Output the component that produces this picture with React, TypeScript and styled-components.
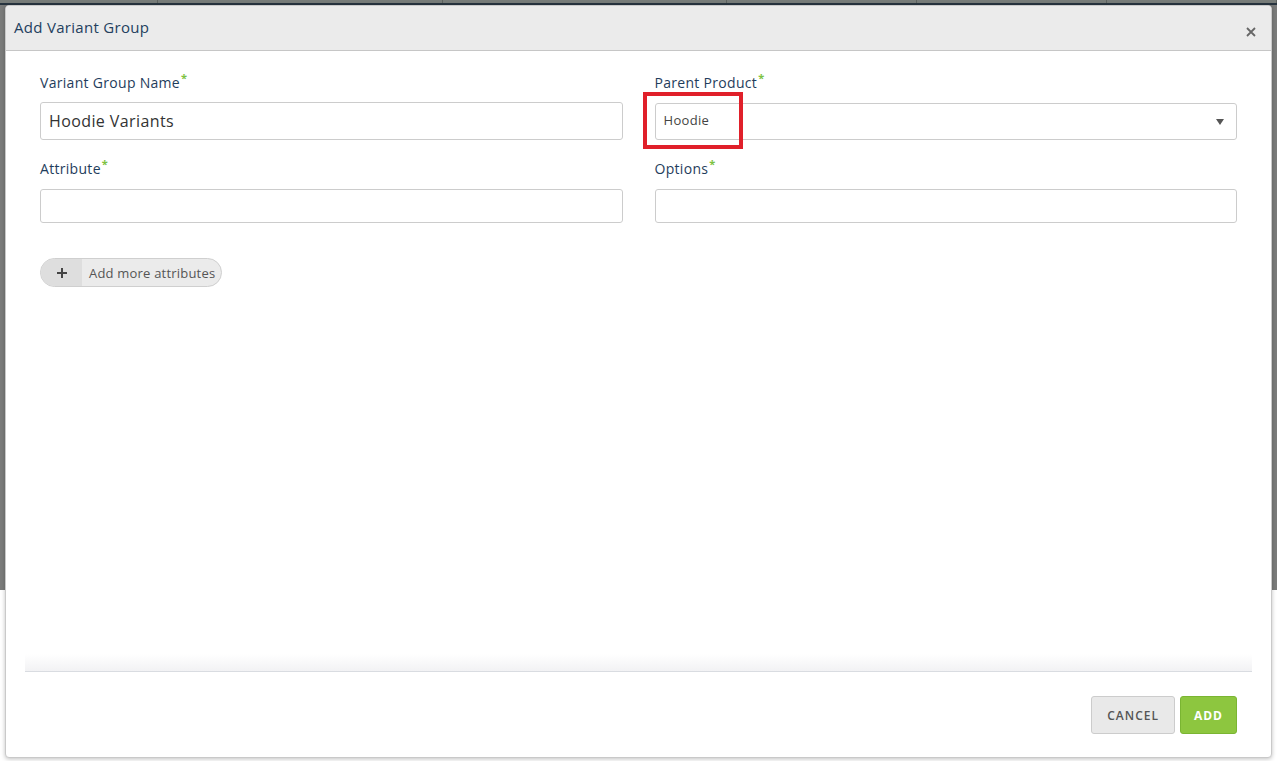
import styled, { createGlobalStyle } from 'styled-components';

const GlobalStyle = createGlobalStyle`
  html, body {
    margin: 0;
    padding: 0;
    background: #ffffff;
    font-family: 'Open Sans', 'Liberation Sans', sans-serif;
  }
  * {
    box-sizing: border-box;
  }
`;

const Page = styled.div`
  width: 1277px;
  height: 761px;
  position: relative;
  overflow: hidden;
  background: #ffffff;
`;

const Backdrop = styled.div`
  height: 590px;
  background: #7b7c7b;
  display: flex;
  flex-direction: column;
`;

const TableHead = styled.div`
  height: 3px;
  display: flex;
  background: #777c79;
  border-bottom: 2px solid #27343f;
  box-sizing: content-box;
`;

const HeadCell = styled.div<{ $w: number }>`
  width: ${(p) => p.$w}px;
  border-right: 1px solid #5d625f;
`;

const Modal = styled.div`
  position: absolute;
  left: 5px;
  top: 5px;
  width: 1267px;
  height: 753px;
  background: #ffffff;
  border: 1px solid #c9c9c9;
  border-radius: 4px;
  box-shadow: 0 1px 4px rgba(0, 0, 0, 0.25);
  display: flex;
  flex-direction: column;
  overflow: hidden;
`;

const Header = styled.div`
  height: 45px;
  flex: none;
  display: flex;
  align-items: center;
  justify-content: space-between;
  padding: 0 14px 2px 8px;
  background: #ebebeb;
  border-bottom: 1px solid #c6c6c6;
`;

const Title = styled.h4`
  margin: 0;
  font-size: 15px;
  font-weight: 400;
  color: #23405e;
  letter-spacing: 0.3px;
`;

const Close = styled.button`
  border: none;
  background: none;
  padding: 0;
  margin-top: 10px;
  width: 12px;
  height: 12px;
  display: flex;
  align-items: center;
  justify-content: center;
  cursor: pointer;
`;

const Body = styled.div`
  flex: 1;
  padding: 25px 34px 0 34px;
  display: flex;
  flex-direction: column;
`;

const Grid = styled.div`
  display: grid;
  grid-template-columns: 1fr 1fr;
  column-gap: 32px;
  row-gap: 22px;
`;

const Field = styled.div`
  display: flex;
  flex-direction: column;
`;

const Label = styled.label<{ $gap?: number }>`
  font-size: 14px;
  font-weight: 400;
  color: #1f3d5c;
  line-height: 14px;
  margin-bottom: ${(p) => p.$gap ?? 12}px;
  height: 14px;
  letter-spacing: 0.3px;
`;

const Req = styled.sup`
  color: #7dc242;
  font-size: 11px;
  font-weight: 700;
  margin-left: 1px;
  vertical-align: 6px;
  line-height: 0;
`;

const TextInput = styled.input<{ $h: number }>`
  height: ${(p) => p.$h}px;
  width: 100%;
  border: 1px solid #cccccc;
  border-radius: 3px;
  padding: 0 8px;
  font-family: inherit;
  font-size: 16px;
  letter-spacing: 0.4px;
  color: #333333;
  outline: none;
  background: #ffffff;
`;

const SelectBox = styled.div`
  height: 37px;
  margin-top: 1px;
  border: 1px solid #cccccc;
  border-radius: 3px;
  display: flex;
  align-items: center;
  justify-content: space-between;
  padding: 0 12px 3px 8px;
  font-size: 13px;
  letter-spacing: 0.3px;
  color: #444444;
  position: relative;
`;

const Highlight = styled.div`
  position: absolute;
  left: -13px;
  top: -12px;
  width: 100px;
  height: 57px;
  border: 4px solid #e0202a;
`;

const Caret = styled.span`
  width: 0;
  height: 0;
  margin-top: 3px;
  border-left: 4px solid transparent;
  border-right: 4px solid transparent;
  border-top: 6px solid #555555;
`;

const AddMore = styled.button`
  margin-top: 35px;
  align-self: flex-start;
  height: 29px;
  display: flex;
  align-items: stretch;
  padding: 0;
  border: 1px solid #cfcfcf;
  border-radius: 15px;
  background: #ebebeb;
  overflow: hidden;
  font-family: inherit;
  cursor: pointer;
`;

const AddIcon = styled.span`
  width: 41px;
  display: flex;
  align-items: center;
  justify-content: center;
  background: #dedede;
`;

const AddText = styled.span`
  display: flex;
  align-items: center;
  padding: 0 6px 0 7px;
  font-size: 13px;
  letter-spacing: 0.2px;
  color: #555555;
`;

const Footer = styled.div`
  flex: none;
  margin: 0 19px;
  height: 86px;
  position: relative;
  border-top: 1px solid #d9dce1;
  display: flex;
  justify-content: flex-end;
  align-items: flex-start;
  padding: 24px 15px 0 0;
  gap: 5px;
  &::before {
    content: '';
    position: absolute;
    left: 0;
    right: 0;
    top: -18px;
    height: 17px;
    background: linear-gradient(to bottom, rgba(242, 242, 244, 0), #f2f2f4);
  }
`;

const Btn = styled.button<{ $primary?: boolean }>`
  height: 38px;
  padding: 0 ${(p) => (p.$primary ? 13 : 15)}px;
  border-radius: 3px;
  font-family: inherit;
  font-size: 12px;
  font-weight: ${(p) => (p.$primary ? 700 : 600)};
  letter-spacing: 1px;
  text-transform: uppercase;
  cursor: pointer;
  border: 1px solid ${(p) => (p.$primary ? '#7ab532' : '#cccccc')};
  background: ${(p) => (p.$primary ? '#8dc63f' : '#e9e9e9')};
  color: ${(p) => (p.$primary ? '#ffffff' : '#555555')};
`;

const heads = [158, 285, 284, 190, 190, 170];

export default function App() {
  return (
    <>
      <GlobalStyle />
      <Page>
        <Backdrop>
          <TableHead>
            {heads.map((w, i) => (
              <HeadCell key={i} $w={w} />
            ))}
          </TableHead>
        </Backdrop>
        <Modal>
          <Header>
            <Title>Add Variant Group</Title>
            <Close aria-label="Close">
              <svg width="10" height="10" viewBox="0 0 10 10">
                <path d="M1 1L9 9M9 1L1 9" stroke="#666" strokeWidth="1.8" />
              </svg>
            </Close>
          </Header>
          <Body>
            <Grid>
              <Field>
                <Label>
                  Variant Group Name<Req>*</Req>
                </Label>
                <TextInput $h={38} defaultValue="Hoodie Variants" />
              </Field>
              <Field>
                <Label>
                  Parent Product<Req>*</Req>
                </Label>
                <SelectBox>
                  <span>Hoodie</span>
                  <Caret />
                  <Highlight />
                </SelectBox>
              </Field>
              <Field>
                <Label $gap={13}>
                  Attribute<Req>*</Req>
                </Label>
                <TextInput $h={34} />
              </Field>
              <Field>
                <Label $gap={13}>
                  Options<Req>*</Req>
                </Label>
                <TextInput $h={34} />
              </Field>
            </Grid>
            <AddMore>
              <AddIcon>
                <svg width="12" height="12" viewBox="0 0 12 12">
                  <path d="M6 1V11M1 6H11" stroke="#444" strokeWidth="2" />
                </svg>
              </AddIcon>
              <AddText>Add more attributes</AddText>
            </AddMore>
          </Body>
          <Footer>
            <Btn>Cancel</Btn>
            <Btn $primary>Add</Btn>
          </Footer>
        </Modal>
      </Page>
    </>
  );
}
